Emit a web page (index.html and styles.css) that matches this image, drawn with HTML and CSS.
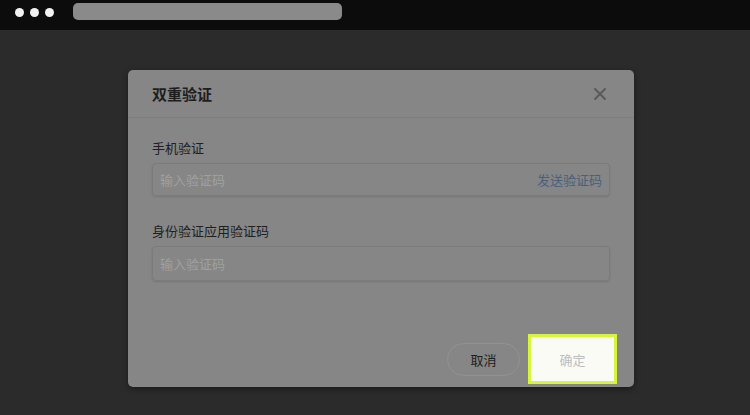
FILE: index.html
```html
<!DOCTYPE html>
<html lang="zh-CN">
<head>
    <meta charset="UTF-8">
    <meta name="viewport" content="width=device-width, initial-scale=1.0">
    <title>双重验证</title>
    <link rel="stylesheet" href="styles.css">
</head>
<body>

    <!-- Browser top bar -->
    <div class="topbar">
        <div class="dots">
            <span class="dot"></span>
            <span class="dot"></span>
            <span class="dot"></span>
        </div>
        <div class="address"></div>
    </div>

    <!-- Dialog -->
    <div class="stage">
        <div class="modal">
            <div class="modal-header">
                <h1>双重验证</h1>
                <span class="close">
                    <svg width="14" height="14" viewBox="0 0 14 14">
                        <path d="M2 2 L12 12 M12 2 L2 12" stroke="#5a5a5a" stroke-width="2" stroke-linecap="round"/>
                    </svg>
                </span>
            </div>

            <div class="modal-body">
                <div class="field">
                    <label>手机验证</label>
                    <div class="input-box">
                        <span class="placeholder">输入验证码</span>
                        <span class="send-link">发送验证码</span>
                    </div>
                </div>
                <div class="field">
                    <label>身份验证应用验证码</label>
                    <div class="input-box tall">
                        <span class="placeholder">输入验证码</span>
                    </div>
                </div>
            </div>

            <div class="modal-footer">
                <button class="btn-cancel">取消</button>
                <button class="btn-ok">确定</button>
            </div>
        </div>
    </div>

</body>
</html>
```

FILE: styles.css
```css
* {
    margin: 0;
    padding: 0;
    box-sizing: border-box;
    font-family: "Noto Sans CJK SC", "Noto Sans", sans-serif;
}
body {
    background: #2b2b2b;
    width: 750px;
    height: 415px;
    overflow: hidden;
}
.topbar {
    height: 30px;
    background: #0c0c0c;
    display: flex;
    align-items: flex-start;
    padding: 3px 0 0 15px;
}
.dots {
    display: flex;
    gap: 6px;
    margin-top: 5px;
}
.dot {
    width: 9px;
    height: 9px;
    border-radius: 50%;
    background: #f2f2f2;
}
.address {
    width: 269px;
    height: 17px;
    margin-left: 19px;
    background: #8a8a8a;
    border-radius: 5px;
}
.stage {
    padding: 40px 0 0 128px;
}
.modal {
    width: 506px;
    height: 317px;
    background: #868686;
    border-radius: 5px;
    box-shadow: 0 2px 6px rgba(0, 0, 0, 0.4);
    display: flex;
    flex-direction: column;
}
.modal-header {
    height: 48px;
    padding: 0 24px;
    display: flex;
    align-items: center;
    justify-content: space-between;
    border-bottom: 1px solid #7d7d7d;
}
.modal-header h1 {
    font-size: 15px;
    font-weight: bold;
    color: #1e1e1e;
}
.close {
    display: flex;
    margin-right: 3px;
}
.modal-body {
    padding: 21px 24px 0;
}
.field {
    margin-bottom: 26px;
}
.field label {
    display: block;
    font-size: 13px;
    color: #1f1f1f;
    line-height: 18px;
    margin-bottom: 6px;
}
.input-box {
    height: 33px;
    border: 1px solid #7b7b7b;
    border-radius: 4px;
    box-shadow: 0 1px 2px rgba(0, 0, 0, 0.12);
    display: flex;
    align-items: center;
    justify-content: space-between;
    padding: 0 7px;
}
.input-box.tall {
    height: 35px;
}
.placeholder {
    font-size: 13px;
    color: #a0a0a0;
}
.send-link {
    font-size: 13px;
    color: #46617f;
}
.modal-footer {
    margin-top: auto;
    display: flex;
    justify-content: flex-end;
    align-items: center;
    gap: 8px;
    padding: 0 17px 3px 0;
}
.btn-cancel {
    width: 73px;
    height: 33px;
    border: 1px solid #929292;
    border-radius: 17px;
    background: #868686;
    color: #1e1e1e;
    font-size: 13px;
}
.btn-ok {
    width: 89px;
    height: 50px;
    border: 3px solid #d6f53c;
    background: #fbfbf6;
    color: #bdbdbd;
    font-size: 13px;
}
```
